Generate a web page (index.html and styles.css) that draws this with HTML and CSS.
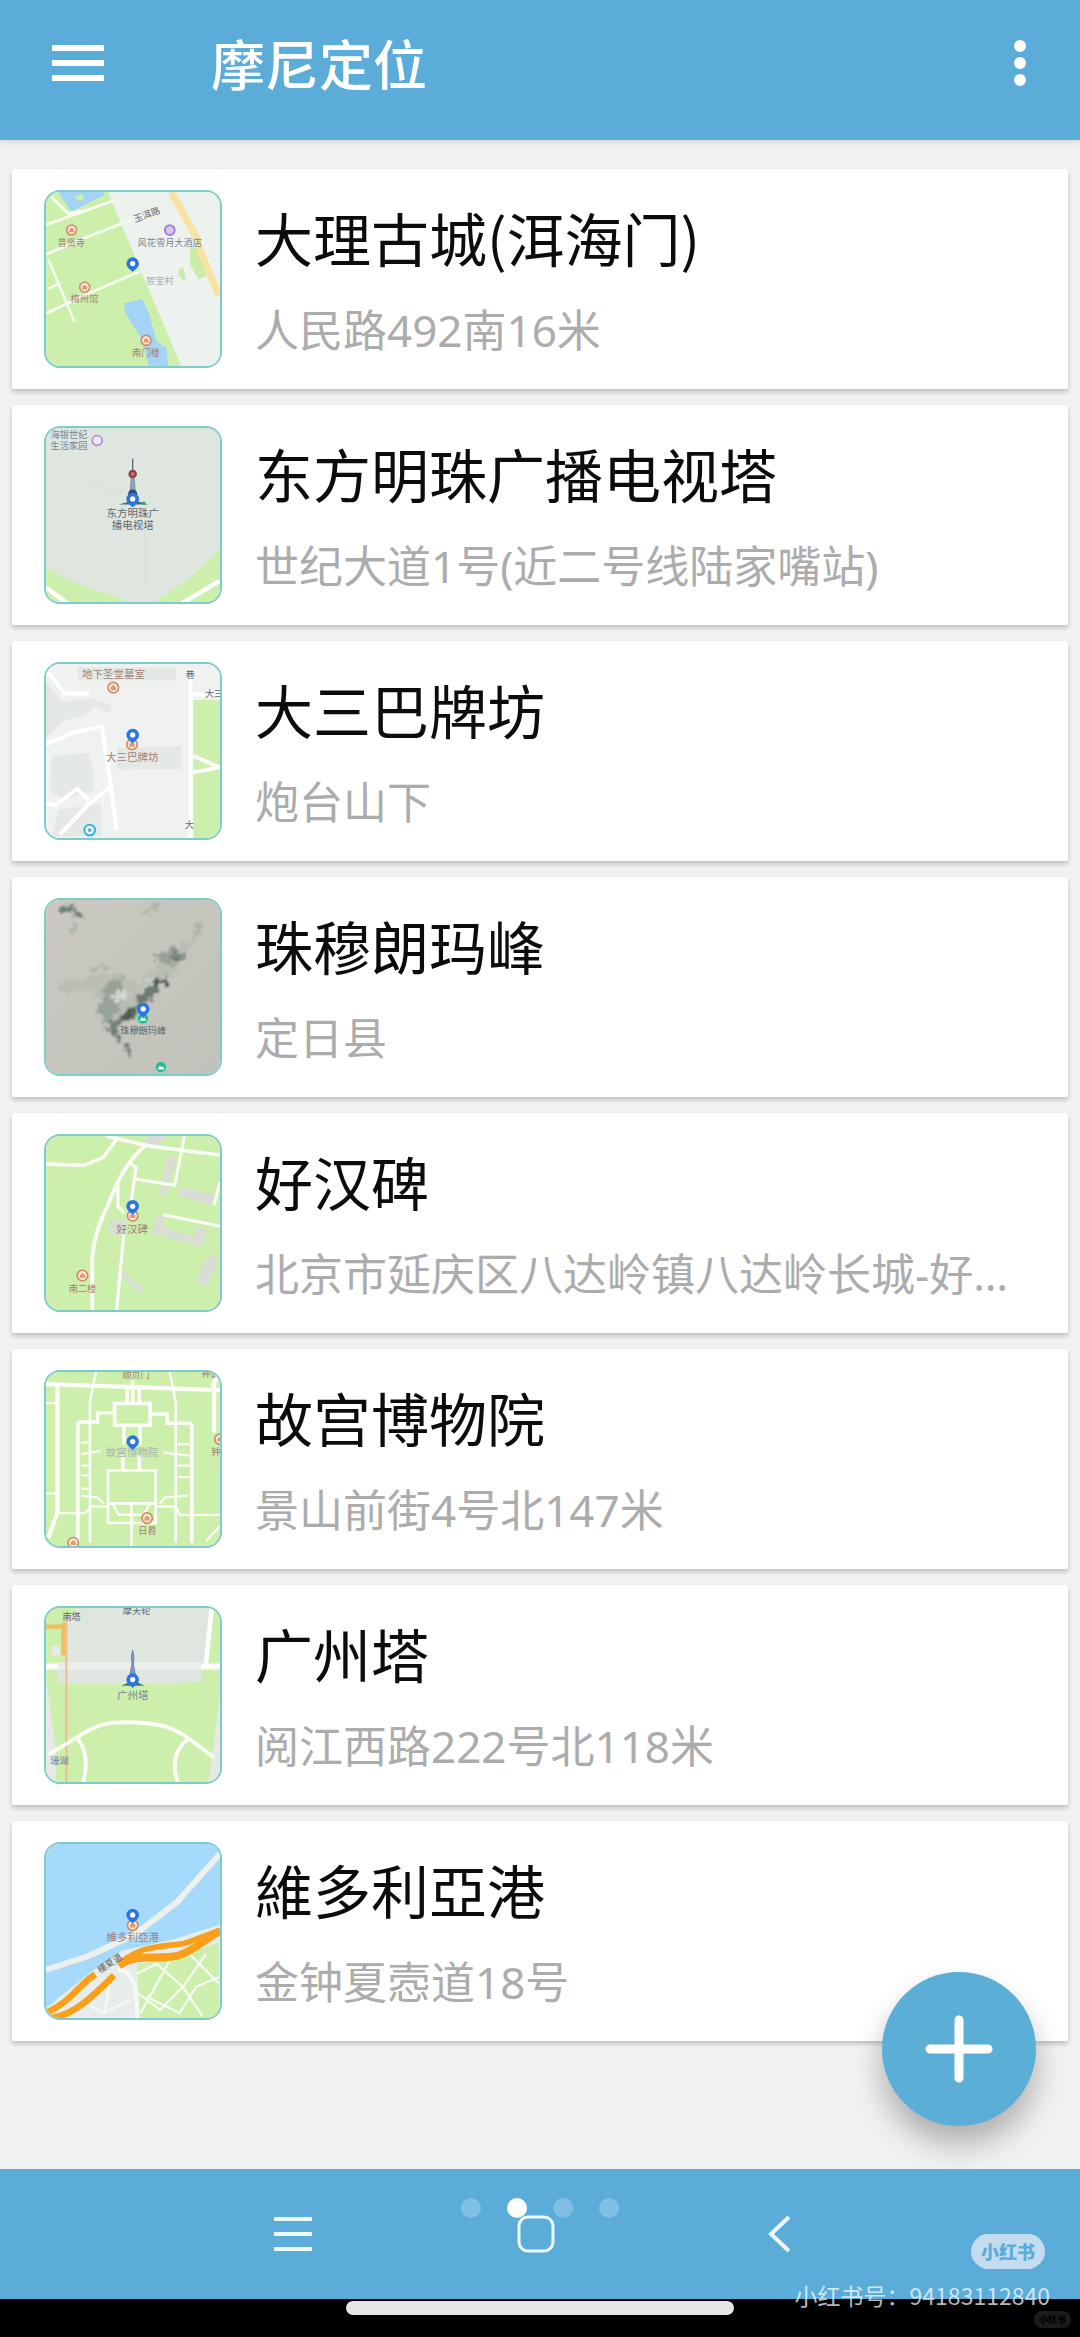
FILE: index.html
```html
<!DOCTYPE html>
<html lang="zh-CN">
<head>
  <meta charset="UTF-8" />
  <title>摩尼定位</title>
  <meta name="viewport" content="width=device-width, initial-scale=1.0" />
  <link rel="stylesheet" href="styles.css">
</head>
<body>

  <!-- Shared map symbols -->
  <svg class="defs" width="0" height="0" aria-hidden="true">
    <symbol id="pin" viewBox="0 0 44 50">
      <path d="M22 2a19 19 0 0 1 19 19c0 12-12 18-19 26C15 39 3 33 3 21A19 19 0 0 1 22 2z" fill="#2b74e4" />
      <circle cx="22" cy="21" r="8" fill="#fff" />
    </symbol>
    <symbol id="poi" viewBox="0 0 40 40">
      <circle cx="20" cy="20" r="16" fill="#f6e9dc" stroke="#d08a62" stroke-width="5" />
      <path d="M12 27V19l8-7 8 7v8z" fill="#dc9a70" />
    </symbol>
    <symbol id="peak" viewBox="0 0 40 40">
      <circle cx="20" cy="20" r="17" fill="#1fbd92" stroke="#8fdcc4" stroke-width="3" />
      <path d="M9 27l8-12 5 6 3-4 6 10z" fill="#fff" />
    </symbol>
  </svg>

  <header class="app-bar">
    <button class="icon-btn" type="button" aria-label="菜单">
      <svg width="52" height="40" viewBox="0 0 52 40"><path d="M0 5h52M0 20h52M0 35h52" stroke="#fff" stroke-width="6" /></svg>
    </button>
    <h1>摩尼定位</h1>
    <button class="icon-btn more" type="button" aria-label="更多">
      <svg width="12" height="48" viewBox="0 0 12 48" fill="#fff"><circle cx="6" cy="7" r="6" /><circle cx="6" cy="24" r="6" /><circle cx="6" cy="41" r="6" /></svg>
    </button>
  </header>

  <main>
    <ul class="places">
      <li class="card">
        <svg class="thumb" viewBox="43 35 530 530">
          <rect x="43" y="35" width="530" height="530" fill="#ccefab" />
          <path d="M232 35L330 270 455 565H573V35z" fill="#eef2ef" />
          <path d="M80 35l40 60 100-50v-10z" fill="#a3d4f5" />
          <path d="M130 50l20-10 10 14-16 10z" fill="#ccefab" />
          <path d="M480 200l25 5 28 85-25 10-25-40zM448 270l12-6 10 34-8 8-14-16z" fill="#c9eda8" />
          <path d="M425 35c30 60 80 130 90 185l55 130" fill="none" stroke="#f8e3a4" stroke-width="22" />
          <path d="M280 375l55-15 20 40 25 90 30 20 6 55h-60l-20-80-50-80z" fill="#a3d4f5" />
          <g fill="none" stroke="#f6fbf0">
            <path d="M60 50l50 50 45-8M43 135l210-75M43 225l105-45 155-60M43 405l150-70 140-60" stroke-width="9" />
            <path d="M50 240l80 190M50 330l30-15" stroke-width="8" />
          </g>
          <use href="#poi" x="102" y="132" width="38" height="38" />
          <use href="#poi" x="142" y="306" width="38" height="38" />
          <use href="#poi" x="329" y="468" width="38" height="38" />
          <circle cx="420" cy="151" r="15" fill="#d6c4f2" stroke="#a37cd8" stroke-width="6" />
          <text class="brown" x="120" y="199">普贤寺</text>
          <text class="brown" x="160" y="370">梅州馆</text>
          <text class="brown" x="347" y="534">南门楼</text>
          <text class="slate" x="420" y="198">风花雪月大酒店</text>
          <text class="faint" x="390" y="315">智宝村</text>
          <text class="dark" x="350" y="114" transform="rotate(-20 350 104)">玉洱路</text>
          <use href="#pin" x="285" y="232" width="44" height="50" />
        </svg>
        <div class="info">
          <h2>大理古城(洱海门)</h2>
          <p>人民路492南16米</p>
        </div>
      </li>

      <li class="card">
        <svg class="thumb" viewBox="43 35 530 530">
          <rect x="43" y="35" width="530" height="530" fill="#dfe6e0" />
          <path d="M43 460c60 40 150 70 260 105H43zM370 565c70-40 140-90 203-165v165z" fill="#ccefab" />
          <path d="M43 520l65 50M455 570l118-70" stroke="#fff" stroke-width="14" />
          <path d="M345 350v165M180 205l80 30" stroke="#d5ddd8" stroke-width="3" />
          <circle cx="199" cy="73" r="15" fill="#eee9f8" stroke="#ab89d8" stroke-width="5" />
          <text class="slate" x="113" y="66">海银世纪</text>
          <text class="slate" x="113" y="98">生活家园</text>
          <path d="M307 128v40" stroke="#596b78" stroke-width="4" />
          <path d="M301 180h12l4 55h-20z" fill="#8aa0b5" />
          <circle cx="307" cy="175" r="13" fill="#8e3e4d" />
          <circle cx="307" cy="175" r="6" fill="#d86a70" />
          <circle cx="307" cy="236" r="14" fill="#334c6c" />
          <path d="M265 268l30-8h32l28 8z" fill="#4a6670" />
          <circle cx="341" cy="264" r="5" fill="#38a35d" />
          <text class="dark large" x="307" y="307">东方明珠广</text>
          <text class="dark large" x="307" y="342">播电视塔</text>
          <use href="#pin" x="285" y="230" width="44" height="50" />
        </svg>
        <div class="info">
          <h2>东方明珠广播电视塔</h2>
          <p>世纪大道1号(近二号线陆家嘴站)</p>
        </div>
      </li>

      <li class="card">
        <svg class="thumb" viewBox="43 35 530 530">
          <rect x="43" y="35" width="530" height="530" fill="#eff2f0" />
          <path d="M43 90l50 60 90-10 60 20-5 25-45-20-30 25-70 20-50 50zM60 315l110-10 20 60-4 60-90 20-40-20zM140 45h300v40H140zM260 290l195-5v70l-195 2zM80 480l130-20 4 100H60z" fill="#e5e9e6" />
          <path d="M492 145h81v420h-81z" fill="#ccefab" />
          <g fill="none" stroke="#fff" stroke-width="12">
            <path d="M483 80v490M480 128h93M492 315l80 35-80 15" />
            <path d="M50 60l50 65h75M43 280l80-35 90-20 25 165 20 150M43 460l30 5 65-50 35 35M85 555l90-95 70-55" />
          </g>
          <use href="#poi" x="228" y="87" width="40" height="40" />
          <use href="#poi" x="285" y="260" width="40" height="40" />
          <circle cx="176" cy="541" r="16" fill="#fff" stroke="#45b2e6" stroke-width="7" />
          <circle cx="176" cy="541" r="6" fill="#45b2e6" />
          <text class="brown large" x="249" y="78">地下圣堂墓室</text>
          <text class="brown large" x="306" y="330">大三巴牌坊</text>
          <text class="dark" x="482" y="78">巷</text>
          <text class="dark" x="555" y="135">大三</text>
          <text class="dark" x="480" y="536">大</text>
          <use href="#pin" x="285" y="230" width="44" height="50" />
        </svg>
        <div class="info">
          <h2>大三巴牌坊</h2>
          <p>炮台山下</p>
        </div>
      </li>

      <li class="card">
        <svg class="thumb" viewBox="43 35 530 530">
          <defs>
            <linearGradient id="snow" x1="0" y1="0" x2="1" y2="1">
              <stop offset="0" stop-color="#cbc9c0" />
              <stop offset="1" stop-color="#c1c2bb" />
            </linearGradient>
            <filter id="rough" x="-10%" y="-10%" width="120%" height="120%">
              <feTurbulence type="fractalNoise" baseFrequency="0.05" numOctaves="3" seed="4" />
              <feDisplacementMap in="SourceGraphic" scale="50" xChannelSelector="R" yChannelSelector="G" />
              <feGaussianBlur stdDeviation="4" />
            </filter>
          </defs>
          <rect x="43" y="35" width="530" height="530" fill="url(#snow)" />
          <g filter="url(#rough)">
            <path d="M70 290l120-20 80-10 50 40 30-40 50-40 60-60 30 10-50 80-40 40-60 60-60 50-80 10 10-60-40-50-70 20z" fill="#b9bdb3" />
            <path d="M230 290l40-20 20 50-30 60-40 40-20-50zM370 200l60-20 40 20-20 30-50 5z" fill="#98a398" />
            <path d="M240 330l40-30 20 20-40 30zM320 330l50-70 30 10-50 60z" fill="#d6d9d1" />
            <path d="M270 400l50-60 60-80 30 20-50 60-50 50-40 30-40-10zM230 410l15-10 20 50-10 10zM285 470l20 35-8 6-20-35zM100 45l60 35-10 10-60-30zM430 195l35 5-15 25-30-10z" fill="#6e7c72" />
            <path d="M270 395l30-35 10 25-30 25zM370 270l40 10-30 30z" fill="#46564c" />
            <path d="M120 110l20 5-10 35-14-10zM480 130l30-20 14 20-30 20zM340 70l50-30 5 10-40 30zM170 240l60-10 10 10-60 15z" fill="#b0b4aa" />
          </g>
          <use href="#peak" x="318" y="376" width="40" height="40" />
          <use href="#peak" x="373" y="524" width="40" height="40" />
          <text class="dark" x="339" y="442">珠穆朗玛峰</text>
          <use href="#pin" x="317" y="346" width="44" height="50" />
        </svg>
        <div class="info">
          <h2>珠穆朗玛峰</h2>
          <p>定日县</p>
        </div>
      </li>

      <li class="card">
        <svg class="thumb" viewBox="43 35 530 530">
          <rect x="43" y="35" width="530" height="530" fill="#ccefab" />
          <path d="M414 95l25 5-30 118-20-8zM455 190l100 25-8 30-105-28zM380 275l28 5-8 34 92 28 12-30 30 6-14 54-155-40zM535 400l35 5-35 85-38-12zM240 290l45-5v50h-50zM275 445l70 60-10 14-65-60zM350 35h60l-20 28h-50z" fill="#d9ddd5" />
          <g fill="none" stroke="#fbfdf6">
            <path d="M43 120l115 5 60-25 40-55M225 35l130 30 218 28" stroke-width="11" />
            <path d="M350 60c-60 50-90 110-120 190-30 60-50 120-46 200v115" stroke-width="12" />
            <path d="M295 115l22 15-15 110M262 180v70l20 20M280 335l-22 230" stroke-width="10" />
            <path d="M310 165l125 20 30-150M400 275l173 35M573 175l-18 70" stroke-width="9" />
          </g>
          <use href="#poi" x="287" y="258" width="40" height="40" />
          <use href="#poi" x="134" y="440" width="40" height="40" />
          <text class="brown large" x="306" y="329">好汉碑</text>
          <text class="brown" x="154" y="509">南二楼</text>
          <use href="#pin" x="285" y="228" width="44" height="50" />
        </svg>
        <div class="info">
          <h2>好汉碑</h2>
          <p>北京市延庆区八达岭镇八达岭长城-好汉碑</p>
        </div>
      </li>

      <li class="card">
        <svg class="thumb" viewBox="43 35 530 530">
          <rect x="43" y="35" width="530" height="530" fill="#ccefab" />
          <g fill="none" stroke="#fbfdf6">
            <path d="M43 72l530 18M78 72v390L50 540M555 60v160M550 80l20-45" stroke-width="13" />
            <path d="M195 35l-18 90v430M420 35l18 90v430" stroke-width="8" />
            <path d="M140 555V195q0-8 10-8h50v-28h52v-28h108v32h52v28h65q10 0 10 10v355" stroke-width="11" />
            <path d="M252 131v66h108v-66M280 197v58M330 197v58M290 80v50M307 60v70M327 80v50M277 290v45M327 290v45" stroke-width="11" />
            <path d="M232 495V335h145v160zM232 435h145M245 435l20 35h75l20-35M303 435v130" stroke-width="8" />
            <path d="M78 465h85l15-20h55M377 445h60l15 25h121M150 250h25M150 285l60-10M150 320h25M150 350h25M150 390h25M150 412l50 5 20 20M400 280l80 10M445 255h35M445 320h35M445 355h35M475 412l-70 5-15 20M43 405h35M43 130h35M530 550l43-45" stroke-width="7" />
          </g>
          <use href="#poi" x="331" y="460" width="40" height="40" />
          <use href="#poi" x="106" y="535" width="40" height="40" />
          <use href="#poi" x="553" y="220" width="40" height="40" />
          <text class="brown" x="317" y="54">顺贞门</text>
          <text class="brown" x="545" y="50">神武</text>
          <text class="faint large" x="305" y="290">故宫博物院</text>
          <text class="brown" x="352" y="528">日晷</text>
          <text class="brown" x="560" y="289">钟</text>
          <use href="#pin" x="285" y="226" width="44" height="50" />
        </svg>
        <div class="info">
          <h2>故宫博物院</h2>
          <p>景山前街4号北147米</p>
        </div>
      </li>

      <li class="card">
        <svg class="thumb" viewBox="43 35 530 530">
          <rect x="43" y="35" width="530" height="530" fill="#ccefab" />
          <path d="M105 35h450l-30 160-10 65-90 5H78v-60l30-10z" fill="#dfe5df" />
          <path d="M43 70l90-30" stroke="#ccefab" stroke-width="20" />
          <path d="M43 213h530" stroke="#eceeec" stroke-width="22" />
          <path d="M43 213h35M515 213h58M548 35l-18 170" stroke="#fff" stroke-width="14" />
          <path d="M43 250l30 210v105H43zM573 300l-20 160-15 105h35zM60 150h25v30H60z" fill="#e6e9e6" />
          <path d="M43 92h60M96 80v100" stroke="#efbd62" stroke-width="13" />
          <path d="M105 60v505" stroke="#f0bb90" stroke-width="6" />
          <g fill="none" stroke="#fbfdf6" stroke-width="12">
            <path d="M50 480c80-40 120-85 190-95 70-5 120 0 165 10 60 20 100 60 150 95" />
            <path d="M138 432c25 30 35 70 18 133M475 435c-40 30-50 80-30 130" />
          </g>
          <text class="dark" x="121" y="72">南塔</text>
          <text class="dark" x="319" y="52">摩天轮</text>
          <text class="slate" x="84" y="509">珊瑚</text>
          <path d="M307 163l4 22-2 20 9 50h-22l9-50-2-20z" fill="#7f98bf" stroke="#6e84a4" stroke-width="3" />
          <path d="M273 272l20-10h30l20 10z" fill="#497a70" />
          <text class="slate large" x="307" y="312">广州塔</text>
          <use href="#pin" x="285" y="232" width="44" height="50" />
        </svg>
        <div class="info">
          <h2>广州塔</h2>
          <p>阅江西路222号北118米</p>
        </div>
      </li>

      <li class="card">
        <svg class="thumb" viewBox="43 35 530 530">
          <rect x="43" y="35" width="530" height="530" fill="#a6dafb" />
          <path d="M43 565V535l130-105 100-70 160-35 140-45v285z" fill="#e8ecea" />
          <path d="M320 400l100-15 150-50v230H330z" fill="#ccefab" />
          <path d="M43 418l130-42 140-65 130-100L573 65" fill="none" stroke="#eef0ee" stroke-width="18" />
          <g fill="none" stroke="#f7faf4" stroke-width="7">
            <path d="M320 430l60-30 80 70 70-100M310 480l80 60 70-70 60 90M420 390l-50 90-40 70M480 370l90 90M350 500l100 50 50-80 70-30M160 520l60 30 80-40M240 450l-20 100" />
            <path d="M262 415c50 10 60 60 58 150" stroke-width="12" />
          </g>
          <g fill="none" stroke="#f99f1c">
            <path d="M43 550c70-30 100-85 150-118M60 565c70-10 130-70 190-130" stroke-width="20" />
            <path d="M265 400c70-55 110-50 200-62l108-40" stroke-width="17" />
            <path d="M265 405c60-40 110-15 180-30 60-20 80-50 128-75" stroke-width="24" />
          </g>
          <use href="#poi" x="287" y="262" width="40" height="40" />
          <text class="brown large" x="307" y="330">維多利亞港</text>
          <text class="dark" x="237" y="408" transform="rotate(-33 237 398)">樓夏道</text>
          <use href="#pin" x="285" y="230" width="44" height="50" />
        </svg>
        <div class="info">
          <h2>維多利亞港</h2>
          <p>金钟夏悫道18号</p>
        </div>
      </li>
    </ul>

    <button class="fab" type="button" aria-label="添加">
      <svg width="68" height="68" viewBox="0 0 68 68"><path d="M34 5v58M5 34h58" stroke="#fff" stroke-width="9" stroke-linecap="round" /></svg>
    </button>
  </main>

  <nav class="nav-bar">
    <button class="icon-btn" type="button" aria-label="最近任务">
      <svg width="38" height="38" viewBox="0 0 38 38"><path d="M0 4h38M0 19h38M0 34h38" stroke="#eef9fb" stroke-width="4" /></svg>
    </button>
    <button class="icon-btn" type="button" aria-label="主屏幕">
      <svg width="38" height="38" viewBox="0 0 38 38"><rect x="2" y="2" width="34" height="34" rx="9" fill="none" stroke="#eef9fb" stroke-width="3" /></svg>
    </button>
    <button class="icon-btn" type="button" aria-label="返回">
      <svg width="38" height="38" viewBox="0 0 38 38"><path d="M29 2L11 19l18 17" fill="none" stroke="#eef9fb" stroke-width="4" /></svg>
    </button>
    <div class="pager">
      <span></span><span class="active"></span><span></span><span></span>
    </div>
    <div class="watermark">
      <span class="badge">小红书</span>
      <span>小红书号：94183112840</span>
    </div>
  </nav>

  <footer class="system-bar">
    <div class="home-indicator"></div>
    <span class="mini-badge">小红书</span>
  </footer>

</body>
</html>
```

FILE: styles.css
```css
* {
  box-sizing: border-box;
}

body {
  font-family: 'Noto Sans CJK SC', 'Noto Sans', sans-serif;
  background: #f1f1f1;
  margin: 0;
  min-height: 100vh;
  display: flex;
  flex-direction: column;
}

h1,
h2,
p,
ul {
  margin: 0;
  padding: 0;
  font-weight: normal;
}

.defs {
  position: absolute;
}

.icon-btn {
  display: flex;
  padding: 0;
  border: none;
  background: none;
  cursor: pointer;
}

/* Top bar */
.app-bar {
  display: flex;
  align-items: center;
  height: 140px;
  padding: 0 54px 14px 52px;
  background: #5bacd8;
  box-shadow: 0 2px 6px rgba(0,0,0,0.12);
}

.app-bar h1 {
  margin-left: 107px;
  font-size: 54px;
  font-weight: 500;
  line-height: 80px;
  color: white;
}

.app-bar .more {
  margin-left: auto;
}

/* Place list */
main {
  flex: 1;
  position: relative;
  padding: 29px 12px 128px;
}

.places {
  display: flex;
  flex-direction: column;
  gap: 16px;
  list-style: none;
}

.card {
  display: flex;
  align-items: center;
  gap: 33px;
  height: 220px;
  padding: 0 32px;
  background: white;
  border-radius: 2px;
  box-shadow: 0 3px 4px rgba(0,0,0,0.2);
}

.thumb {
  flex: none;
  width: 178px;
  height: 178px;
  border: 2px solid #7fcbc9;
  border-radius: 16px;
}

.thumb text {
  font-size: 28px;
  text-anchor: middle;
}

.thumb .large {
  font-size: 32px;
}

.thumb .brown {
  fill: #a37f76;
}

.thumb .slate {
  fill: #76859a;
}

.thumb .dark {
  fill: #5f666b;
}

.thumb .faint {
  fill: #a9b3ae;
}

.info {
  flex: 1;
  min-width: 0;
}

.info h2 {
  font-size: 58px;
  line-height: 84px;
  color: #0c0c0c;
}

.info p {
  margin-top: 18px;
  font-family: 'Noto Sans', 'Noto Sans CJK SC', sans-serif;
  font-size: 44px;
  line-height: 66px;
  color: #acacac;
  white-space: nowrap;
  overflow: hidden;
  text-overflow: ellipsis;
}

.fab {
  position: absolute;
  right: 44px;
  bottom: 43px;
  display: flex;
  align-items: center;
  justify-content: center;
  width: 154px;
  height: 154px;
  padding: 0;
  border: none;
  border-radius: 50%;
  background: #5bafd7;
  box-shadow: 0 18px 30px rgba(0,0,0,0.28);
  cursor: pointer;
}

/* Bottom navigation */
.nav-bar {
  position: relative;
  display: flex;
  align-items: center;
  justify-content: center;
  gap: 205px;
  height: 130px;
  padding-right: 8px;
  background: #5bacd8;
}

.pager {
  position: absolute;
  top: 29px;
  left: 50%;
  display: flex;
  gap: 26px;
  transform: translateX(-50%);
}

.pager span {
  width: 20px;
  height: 20px;
  border-radius: 50%;
  background: #7fbfe3;
}

.pager .active {
  background: white;
}

.watermark {
  position: absolute;
  right: 30px;
  bottom: -14px;
  z-index: 1;
  display: flex;
  flex-direction: column;
  align-items: flex-end;
  gap: 9px;
  font-size: 23px;
  line-height: 35px;
  color: rgba(255,255,255,0.72);
}

.badge {
  margin-right: 5px;
  padding: 0 10px;
  border-radius: 18px;
  background: #c4dcef;
  font-size: 18px;
  font-weight: 900;
  color: #5bacd8;
}

.system-bar {
  position: relative;
  display: flex;
  justify-content: center;
  align-items: flex-start;
  height: 38px;
  padding-top: 2px;
  background: black;
}

.home-indicator {
  width: 36%;
  height: 14px;
  border-radius: 7px;
  background: #e5e5e3;
}

.mini-badge {
  position: absolute;
  right: 9px;
  bottom: 9px;
  padding: 0 5px;
  border-radius: 8px;
  background: #1b1b1b;
  font-size: 9px;
  font-weight: 900;
  line-height: 17px;
  color: black;
}
```
